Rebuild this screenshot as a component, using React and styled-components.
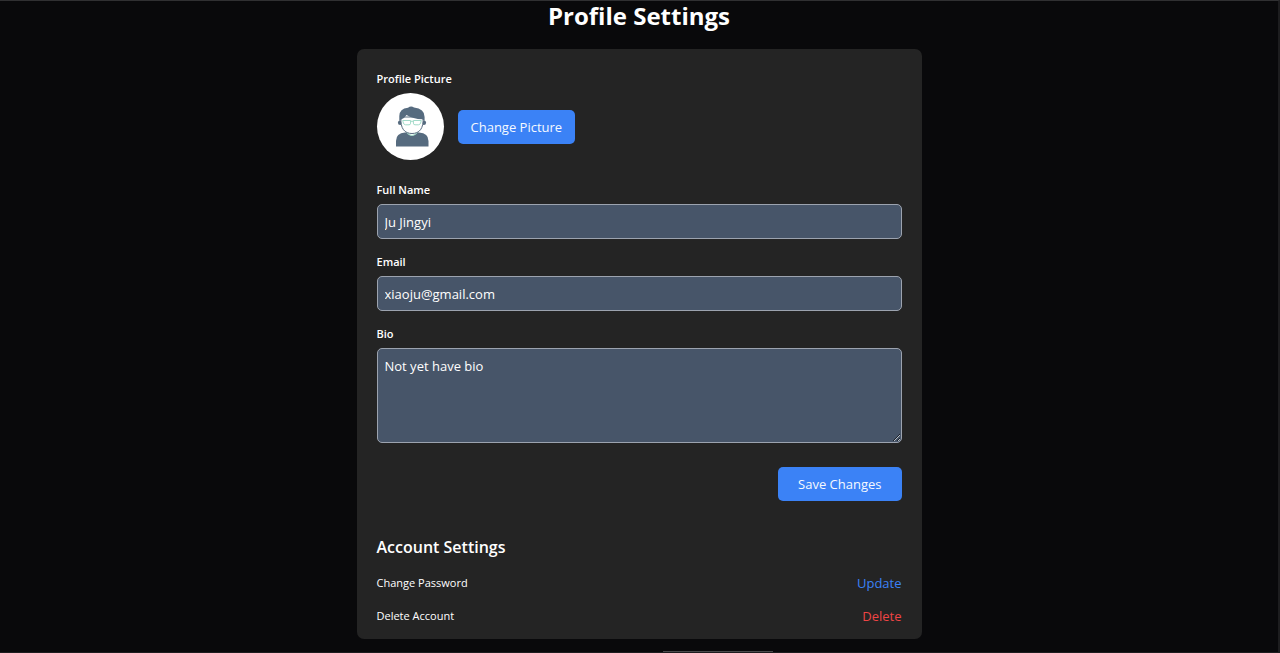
import React from "react";
import styled, { createGlobalStyle } from "styled-components";

const GlobalStyle = createGlobalStyle`
  *, *::before, *::after { box-sizing: border-box; }
  body {
    margin: 0;
    background: #09090b;
    color: #fff;
    font-family: "Segoe UI", "Open Sans", "Noto Sans", sans-serif;
    font-size: 13px;
  }
  h1, h2 { margin: 0; }
  button, input, textarea { font: inherit; color: inherit; }
`;

const Page = styled.div`
  position: relative;
  display: flex;
  flex-direction: column;
  align-items: center;
  min-height: 100vh;
  border-top: 1px solid #303032;
  border-right: 2px solid #1d1d1f;
  border-bottom: 1px solid #1d1d1f;
`;

const Title = styled.h1`
  font-size: 24px;
  line-height: 30px;
  font-weight: 700;
  margin-bottom: 18px;
`;

const Card = styled.main`
  width: 100%;
  max-width: 565px;
  padding: 20px 20px 13px;
  border-radius: 7px;
  background: #242424;
`;

const Form = styled.form`
  display: flex;
  flex-direction: column;
  gap: 13px;
`;

const Field = styled.div`
  display: flex;
  flex-direction: column;
  gap: 4px;
`;

const PictureField = styled(Field)`
  margin-bottom: 7px;
`;

const Label = styled.label`
  font-size: 11px;
  line-height: 20px;
  font-weight: 600;
`;

const PictureRow = styled.div`
  display: flex;
  align-items: center;
  gap: 14px;
`;

const Avatar = styled.svg`
  width: 67px;
  height: 67px;
  border-radius: 50%;
  background: #fff;
`;

const Button = styled.button`
  height: 34px;
  padding: 0 ${(p) => (p.$wide ? 20 : 13)}px;
  border: 0;
  border-radius: 5px;
  background: #3b82f6;
  color: #f5f9ff;
  cursor: pointer;
`;

const Input = styled.input`
  width: 100%;
  height: 35px;
  padding: 0 7px;
  border: 1px solid #9ca3af;
  border-radius: 5px;
  background: #475569;
  outline: 0;
`;

const TextArea = styled.textarea`
  display: block;
  width: 100%;
  height: 95px;
  padding: 7px;
  line-height: 20px;
  border: 1px solid #9ca3af;
  border-radius: 5px;
  background: #475569;
  outline: 0;
  resize: vertical;
`;

const Actions = styled.div`
  display: flex;
  justify-content: flex-end;
  margin-top: 11px;
`;

const Account = styled.section`
  display: flex;
  flex-direction: column;
  gap: 13px;
  margin-top: 33px;
`;

const SectionTitle = styled.h2`
  font-size: 16px;
  line-height: 26px;
  font-weight: 600;
`;

const Row = styled.div`
  display: flex;
  align-items: center;
  justify-content: space-between;
  font-size: 11px;
  line-height: 20px;
`;

const TextButton = styled.button`
  padding: 0;
  border: 0;
  background: none;
  font-size: 13px;
  line-height: 20px;
  color: ${(p) => (p.$danger ? "#ef4444" : "#3b82f6")};
  cursor: pointer;
`;

const BottomHandle = styled.div`
  position: absolute;
  left: 50%;
  bottom: 0;
  width: 110px;
  height: 1px;
  margin-left: 24px;
  background: #4a4a4c;
`;

function AvatarPicture() {
  return (
    <Avatar viewBox="0 0 67 67" role="img" aria-label="Profile picture">
      <path d="M19 53.5V48Q19 40 28 39.5H42Q51.5 40 51.5 48V53.5Z" fill="#566b7f" />
      <path d="M29.5 39Q35 46 40.5 39Z" fill="#fff" stroke="#a9ddcb" strokeWidth="1.2" />
      <circle cx="23.2" cy="29.8" r="2.3" fill="#566b7f" />
      <circle cx="46.8" cy="29.8" r="2.3" fill="#566b7f" />
      <path
        d="M24 24C23 36 28 40.5 35 40.5S47 36 46 24Z"
        fill="#fff"
        stroke="#566b7f"
        strokeWidth="1"
      />
      <path
        d="M22.3 28V23Q22.5 15.5 31 14.7Q34 12.6 37 14.5Q47.6 15.5 47.6 24V28L45.3 26.3Q36 26 29.5 22Q27 25.7 24.5 26.3Z"
        fill="#566b7f"
      />
      <path
        d="M25.7 27.5H33.6V30.2Q33.6 31.8 32 31.8H28.5Q27 31.8 26.4 30ZM36.4 27.5H44.3L43.6 30Q43 31.8 41.5 31.8H38Q36.4 31.8 36.4 30.2ZM33.6 28.3H36.4"
        fill="#fff"
        stroke="#a2dac9"
        strokeWidth="1"
      />
    </Avatar>
  );
}

export default function App() {
  return (
    <>
      <GlobalStyle />
      <Page>
        <Title>Profile Settings</Title>
        <Card>
          <Form onSubmit={(e) => e.preventDefault()}>
            <PictureField>
              <Label as="span">Profile Picture</Label>
              <PictureRow>
                <AvatarPicture />
                <Button type="button">Change Picture</Button>
              </PictureRow>
            </PictureField>
            <Field>
              <Label htmlFor="name">Full Name</Label>
              <Input id="name" type="text" defaultValue="Ju Jingyi" />
            </Field>
            <Field>
              <Label htmlFor="email">Email</Label>
              <Input id="email" type="email" defaultValue="xiaoju@gmail.com" />
            </Field>
            <Field>
              <Label htmlFor="bio">Bio</Label>
              <TextArea id="bio" defaultValue="Not yet have bio" />
            </Field>
            <Actions>
              <Button type="submit" $wide>
                Save Changes
              </Button>
            </Actions>
          </Form>
          <Account>
            <SectionTitle>Account Settings</SectionTitle>
            <Row>
              <span>Change Password</span>
              <TextButton type="button">Update</TextButton>
            </Row>
            <Row>
              <span>Delete Account</span>
              <TextButton type="button" $danger>
                Delete
              </TextButton>
            </Row>
          </Account>
        </Card>
        <BottomHandle />
      </Page>
    </>
  );
}
